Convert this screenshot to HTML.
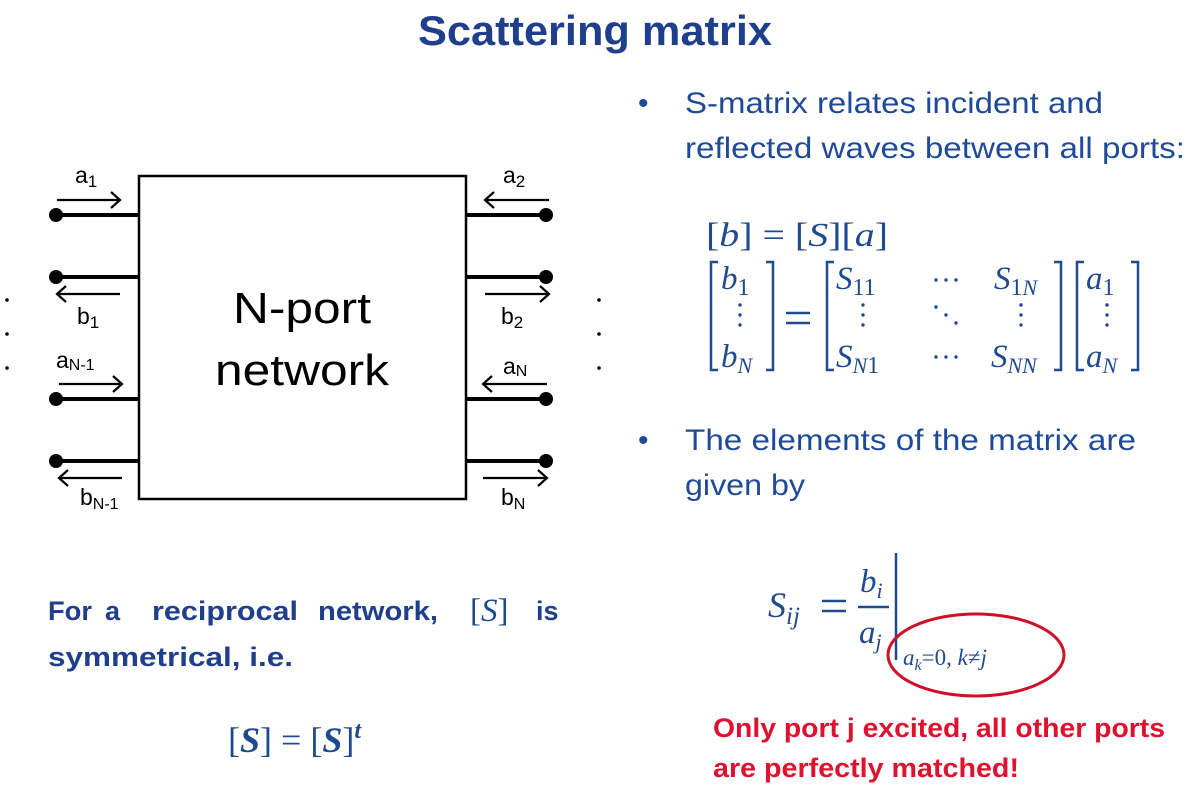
<!DOCTYPE html>
<html><head><meta charset="utf-8"><style>
html,body{margin:0;padding:0;background:#fff;}
svg{display:block;}
.t{font-family:"Liberation Sans",sans-serif;}
.m{font-family:"Liberation Serif",serif;font-style:italic;fill:#1f4a8f;}
.mu{font-family:"Liberation Serif",serif;fill:#1f4a8f;}
</style></head><body>
<svg width="1198" height="798" viewBox="0 0 1198 798" xmlns="http://www.w3.org/2000/svg">
<text class="t" x="418" y="45" font-size="42" font-weight="bold" fill="#1f3f8c" textLength="354" lengthAdjust="spacingAndGlyphs">Scattering matrix</text>

<!-- diagram -->
<g stroke="#000" fill="none">
<rect x="139" y="176" width="327" height="323" stroke-width="2.5"/>
<g stroke-width="4">
<line x1="55" y1="215" x2="139" y2="215"/><line x1="55" y1="277" x2="139" y2="277"/>
<line x1="55" y1="399" x2="139" y2="399"/><line x1="55" y1="461" x2="139" y2="461"/>
<line x1="466" y1="215" x2="546" y2="215"/><line x1="466" y1="277" x2="546" y2="277"/>
<line x1="466" y1="399" x2="546" y2="399"/><line x1="466" y1="461" x2="546" y2="461"/>
</g>
<g stroke-width="2.2">
<path d="M57 200H120M111 192L120 200L111 208"/>
<path d="M57 294H120M66 286L57 294L66 302"/>
<path d="M59 384H122M113 376L122 384L113 392"/>
<path d="M59 478H122M68 470L59 478L68 486"/>
<path d="M485 200H549M494 192L485 200L494 208"/>
<path d="M485 294H549M540 286L549 294L540 302"/>
<path d="M483 384H547M492 376L483 384L492 392"/>
<path d="M483 478H547M538 470L547 478L538 486"/>
</g>
</g>
<g fill="#000">
<circle cx="56" cy="215" r="7"/><circle cx="56" cy="277" r="7"/><circle cx="56" cy="399" r="7"/><circle cx="56" cy="461" r="7"/>
<circle cx="546" cy="215" r="7"/><circle cx="546" cy="277" r="7"/><circle cx="546" cy="399" r="7"/><circle cx="546" cy="461" r="7"/>
<circle cx="7" cy="300" r="1.8"/><circle cx="7" cy="334" r="1.8"/><circle cx="7" cy="368" r="1.8"/>
<circle cx="599" cy="300" r="1.8"/><circle cx="599" cy="334" r="1.8"/><circle cx="599" cy="368" r="1.8"/>
</g>
<g class="t" fill="#000" font-size="23">
<text x="75" y="183">a<tspan font-size="17" dy="4">1</tspan></text>
<text x="77" y="324">b<tspan font-size="17" dy="4">1</tspan></text>
<text x="56" y="368">a<tspan font-size="16" dy="2">N-1</tspan></text>
<text x="80" y="505">b<tspan font-size="16" dy="4">N-1</tspan></text>
<text x="503" y="183">a<tspan font-size="17" dy="4">2</tspan></text>
<text x="501" y="324">b<tspan font-size="17" dy="4">2</tspan></text>
<text x="503" y="374">a<tspan font-size="16" dy="2">N</tspan></text>
<text x="501" y="505">b<tspan font-size="16" dy="4">N</tspan></text>
<text x="302" y="323" text-anchor="middle" font-size="44" textLength="138" lengthAdjust="spacingAndGlyphs">N-port</text>
<text x="302" y="385" text-anchor="middle" font-size="44" textLength="174" lengthAdjust="spacingAndGlyphs">network</text>
</g>

<!-- bullets -->
<g class="t" fill="#1f4a9a" font-size="30">
<text x="638" y="113">•</text>
<text x="685" y="113" textLength="418" lengthAdjust="spacingAndGlyphs">S-matrix relates incident and</text>
<text x="685" y="158" textLength="500" lengthAdjust="spacingAndGlyphs">reflected waves between all ports:</text>
<text x="638" y="450">•</text>
<text x="685" y="450" textLength="451" lengthAdjust="spacingAndGlyphs">The elements of the matrix are</text>
<text x="685" y="495" textLength="120" lengthAdjust="spacingAndGlyphs">given by</text>
</g>

<!-- matrix -->
<text class="mu" x="706" y="246" font-size="34" textLength="182" lengthAdjust="spacingAndGlyphs">[<tspan class="m">b</tspan>] = [<tspan class="m">S</tspan>][<tspan class="m">a</tspan>]</text>
<g stroke="#1f4a8f" stroke-width="2.5" fill="none">
<path d="M718 262H711V370H718"/><path d="M766 262H773V370H766"/>
<path d="M834 262H827V370H834"/><path d="M1054 262H1061V370H1054"/>
<path d="M1084 262H1077V370H1084"/><path d="M1131 262H1138V370H1131"/>
<line x1="786" y1="313" x2="810" y2="313"/><line x1="786" y1="323" x2="810" y2="323"/>
</g>
<g font-size="33">
<text class="m" x="721" y="289">b<tspan font-style="normal" font-size="24" dy="6">1</tspan></text>
<text class="m" x="721" y="367">b<tspan font-size="22" dy="6">N</tspan></text>
<text class="m" x="836" y="289">S<tspan font-style="normal" font-size="24" dy="6">11</tspan></text>
<text class="m" x="836" y="367">S<tspan font-size="22" dy="6">N</tspan><tspan font-style="normal" font-size="24">1</tspan></text>
<text class="m" x="994" y="289">S<tspan font-style="normal" font-size="24" dy="6">1</tspan><tspan font-size="22">N</tspan></text>
<text class="m" x="991" y="367">S<tspan font-size="22" dy="6">NN</tspan></text>
<text class="m" x="1086" y="289">a<tspan font-style="normal" font-size="24" dy="6">1</tspan></text>
<text class="m" x="1086" y="367">a<tspan font-size="22" dy="6">N</tspan></text>
</g>
<g fill="#1f4a8f">
<circle cx="740" cy="305" r="1.7"/><circle cx="740" cy="315" r="1.7"/><circle cx="740" cy="325" r="1.7"/>
<circle cx="863" cy="305" r="1.7"/><circle cx="863" cy="315" r="1.7"/><circle cx="863" cy="325" r="1.7"/>
<circle cx="1021" cy="305" r="1.7"/><circle cx="1021" cy="315" r="1.7"/><circle cx="1021" cy="325" r="1.7"/>
<circle cx="1107" cy="305" r="1.7"/><circle cx="1107" cy="315" r="1.7"/><circle cx="1107" cy="325" r="1.7"/>
<circle cx="936" cy="280" r="1.7"/><circle cx="946" cy="280" r="1.7"/><circle cx="956" cy="280" r="1.7"/>
<circle cx="936" cy="357" r="1.7"/><circle cx="946" cy="357" r="1.7"/><circle cx="956" cy="357" r="1.7"/>
<circle cx="936" cy="307" r="1.7"/><circle cx="946" cy="315" r="1.7"/><circle cx="956" cy="323" r="1.7"/>
</g>

<!-- S_ij formula -->
<text class="m" x="768" y="617" font-size="36">S<tspan font-size="25" dy="7">ij</tspan></text>
<g stroke="#1f4a8f" stroke-width="2.5">
<line x1="822" y1="601" x2="846" y2="601"/><line x1="822" y1="611" x2="846" y2="611"/>
<line x1="858" y1="607" x2="889" y2="607"/>
<line x1="896" y1="553" x2="896" y2="660"/>
</g>
<text class="m" x="860" y="592" font-size="33">b<tspan font-size="22" dy="6">i</tspan></text>
<text class="m" x="859" y="643" font-size="33">a<tspan font-size="22" dy="6">j</tspan></text>
<text class="m" x="903" y="665" font-size="23">a<tspan font-size="16" dy="5">k</tspan><tspan font-style="normal" dy="-5">=0, </tspan>k<tspan font-style="normal">≠</tspan>j</text>
<ellipse cx="976" cy="655" rx="88" ry="41" fill="none" stroke="#d0102a" stroke-width="3"/>

<!-- bottom left -->
<g class="t" fill="#1f3f8c" font-size="27" font-weight="bold">
<text x="48" y="620" textLength="44" lengthAdjust="spacingAndGlyphs">For</text>
<text x="105" y="620">a</text>
<text x="152" y="620" textLength="146" lengthAdjust="spacingAndGlyphs">reciprocal</text>
<text x="318" y="620" textLength="120" lengthAdjust="spacingAndGlyphs">network,</text>
<text class="mu" x="470" y="621" font-weight="normal" font-size="33">[<tspan class="m">S</tspan>]</text>
<text x="536" y="620">is</text>
<text x="48" y="666" textLength="245" lengthAdjust="spacingAndGlyphs">symmetrical, i.e.</text>
</g>
<text class="mu" x="228" y="752" font-size="36">[<tspan class="m" font-weight="bold">S</tspan>] = [<tspan class="m" font-weight="bold">S</tspan>]<tspan class="m" font-weight="bold" font-size="24" dy="-14">t</tspan></text>

<g class="t" fill="#e0102f" font-size="27" font-weight="bold">
<text x="713" y="737" textLength="452" lengthAdjust="spacingAndGlyphs">Only port j excited, all other ports</text>
<text x="713" y="777" textLength="306" lengthAdjust="spacingAndGlyphs">are perfectly matched!</text>
</g>
</svg>
</body></html>
